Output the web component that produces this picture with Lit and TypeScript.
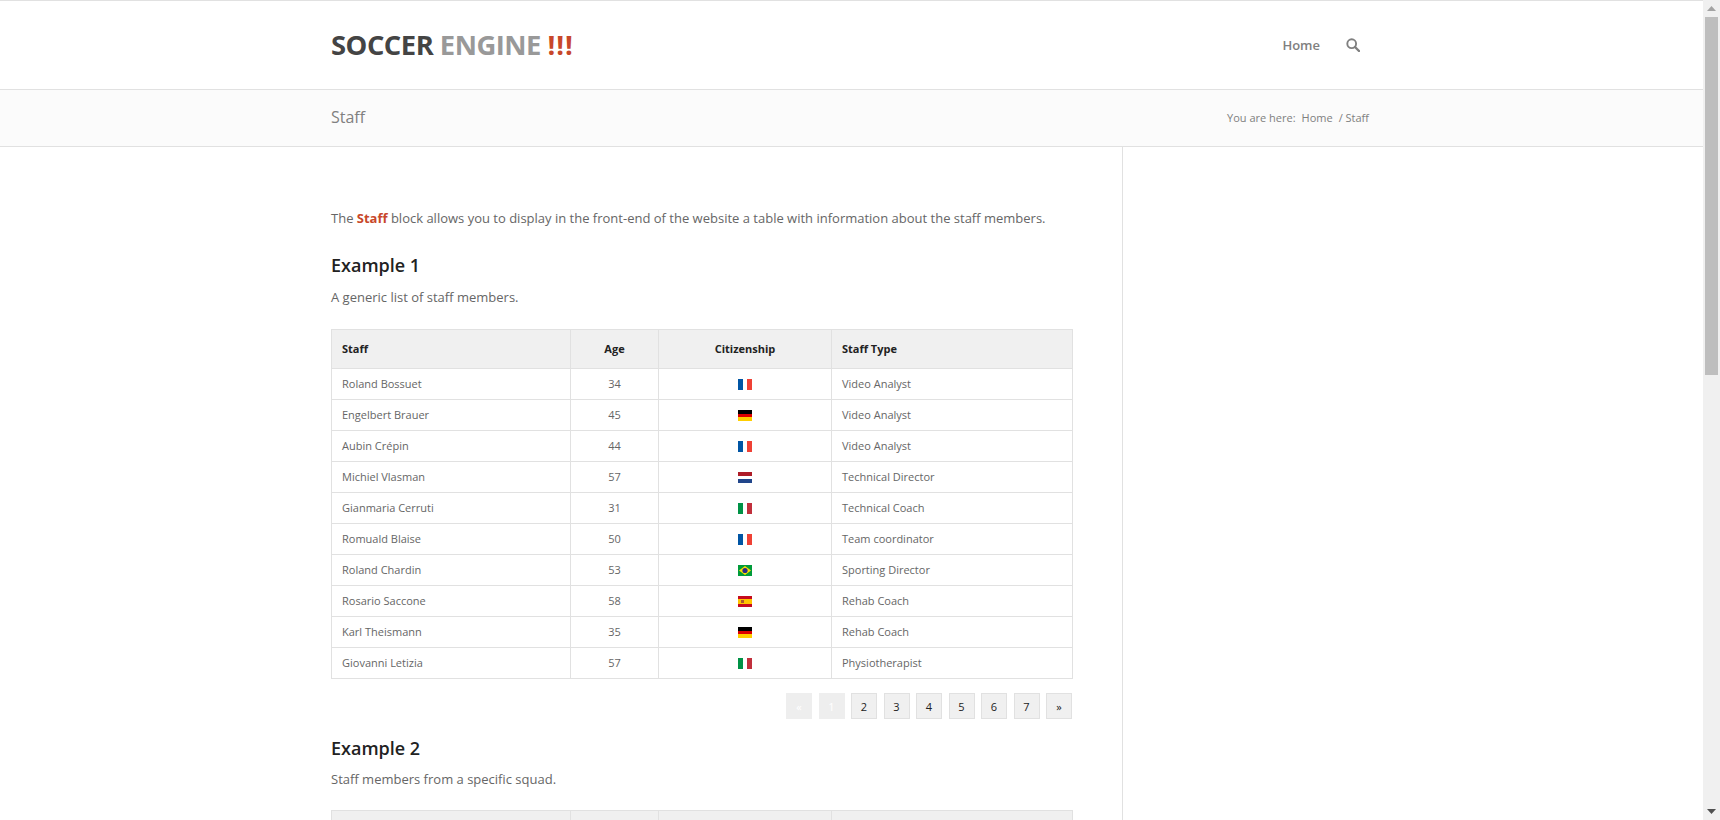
import { LitElement, html, css, svg } from "lit";
import { customElement } from "lit/decorators.js";

type Flag = "fr" | "de" | "nl" | "it" | "br" | "es";
const rows: [string, string, Flag, string][] = [
  ["Roland Bossuet", "34", "fr", "Video Analyst"],
  ["Engelbert Brauer", "45", "de", "Video Analyst"],
  ["Aubin Crépin", "44", "fr", "Video Analyst"],
  ["Michiel Vlasman", "57", "nl", "Technical Director"],
  ["Gianmaria Cerruti", "31", "it", "Technical Coach"],
  ["Romuald Blaise", "50", "fr", "Team coordinator"],
  ["Roland Chardin", "53", "br", "Sporting Director"],
  ["Rosario Saccone", "58", "es", "Rehab Coach"],
  ["Karl Theismann", "35", "de", "Rehab Coach"],
  ["Giovanni Letizia", "57", "it", "Physiotherapist"],
];

function flag(f: Flag) {
  const body = {
    fr: svg`<rect width="14" height="11" fill="#fff"/><rect width="5" height="11" fill="#0055a4"/><rect x="9" width="5" height="11" fill="#ef4135"/>`,
    it: svg`<rect width="14" height="11" fill="#fff"/><rect width="5" height="11" fill="#009246"/><rect x="9" width="5" height="11" fill="#c1303c"/>`,
    de: svg`<rect width="14" height="4" fill="#000"/><rect y="4" width="14" height="3" fill="#dd0000"/><rect y="7" width="14" height="4" fill="#ffce00"/>`,
    nl: svg`<rect width="14" height="4" fill="#ae1c28"/><rect y="4" width="14" height="3" fill="#fff"/><rect y="7" width="14" height="4" fill="#21468b"/>`,
    es: svg`<rect width="14" height="11" fill="#c60b1e"/><rect y="3" width="14" height="5" fill="#ffc400"/><rect x="3" y="4" width="3" height="3" fill="#ad5a2a"/>`,
    br: svg`<rect width="14" height="11" fill="#009b3a"/><path d="M7 1 13 5.5 7 10 1 5.5Z" fill="#fedf00"/><circle cx="7" cy="5.5" r="2.6" fill="#2a2a86"/>`,
  }[f];
  return html`<svg class="flag" width="14" height="11" viewBox="0 0 14 11">${body}</svg>`;
}

@customElement("app-root")
export class AppRoot extends LitElement {
  static styles = css`
    :host {
      display: flex;
      width: 1720px;
      height: 820px;
      overflow: hidden;
      background: #fff;
      font-family: "Open Sans", sans-serif;
      font-size: 13px;
      color: #666;
    }
    .page { width: 1703px; height: 820px; overflow: hidden; flex: none; }
    .inner { width: 1030px; margin-left: 331px; }
    .header { height: 88px; border-top: 1px solid #e1e1e1; border-bottom: 1px solid #e1e1e1; }
    .header .inner { height: 88px; display: flex; align-items: center; justify-content: space-between; box-sizing: border-box; }
    .logo { font-size: 27.4px; font-weight: 700; letter-spacing: -0.5px; line-height: 32px; margin-top: -1px; white-space: nowrap; }
    .logo .a { color: #444; }
    .logo .b { color: #999; }
    .logo .x { color: #c8472a; letter-spacing: 0.9px; }
    nav { display: flex; align-items: center; gap: 26px; margin-top: -1px; margin-right: 1px; }
    nav a { font-size: 13px; font-weight: 600; color: #808080; }
    nav svg { display: block; }
    .title { height: 56px; background: #fbfbfb; border-bottom: 1px solid #e1e1e1; }
    .title .inner { height: 56px; padding-bottom: 2px; box-sizing: border-box; display: flex; align-items: center; justify-content: space-between; width: 1038px; }
    .title h1 { margin: 0; font-size: 16px; font-weight: 400; color: #808080; }
    .crumbs { font-size: 11px; color: #808080; white-space: pre; display: flex; }
    .crumbs .m1 { margin-left: 6px; }
    .crumbs .m2 { margin-left: 6px; }
    .main { display: flex; height: 673px; }
    .content { width: 792px; margin-left: 331px; box-sizing: border-box; border-right: 1px solid #e1e1e1; height: 1000px; padding-top: 61px; flex: none; }
    .col { width: 742px; }
    p { margin: 0; line-height: 20px; font-size: 13px; }
    p b { color: #c8472a; font-weight: 700; }
    h3 { margin: 0; font-size: 18px; font-weight: 600; line-height: 24px; color: #222; }
    .h1 { margin-top: 25px; }
    .sub { margin-top: 10px; }
    .sub2 { margin-top: 9px; }
    .tbl { margin-top: 22px; }
    .tbl2 { margin-top: 21px; }
    table { display: table; border-collapse: collapse; width: 741px; table-layout: fixed; font-size: 11px; }
    th, td { border: 1px solid #e1e1e1; padding: 0 10px 1px; text-align: left; overflow: hidden; white-space: nowrap; }
    th { height: 39px; box-sizing: border-box; background: #f0f0f0; color: #222; font-weight: 700; font-size: 11px; }
    td { height: 31px; box-sizing: border-box; color: #666; }
    .c { text-align: center; }
    .flag { display: block; margin: 1px auto 0; }
    .pager { display: flex; justify-content: flex-end; gap: 6.5px; margin-top: 14px; padding-right: 1px; }
    .pager span { width: 26px; height: 26px; box-sizing: border-box; border: 1px solid #e1e1e1; background: #f0f0f0; color: #222; font-size: 11px; display: flex; align-items: center; justify-content: center; }
    .pager span.off { border-color: #eee; background: #eee; color: #fff; }
    .h2 { margin-top: 17px; }
    .sb { width: 17px; flex: none; background: #f0f0f0; display: flex; flex-direction: column; align-items: center; }
    .sb .up { height: 17px; display: flex; align-items: center; justify-content: center; flex: none; }
    .sb .thumb { width: 13px; height: 358px; background: #bebebe; flex: none; }
    .sb .down { margin-top: auto; height: 17px; display: flex; align-items: center; justify-content: center; flex: none; }
  `;

  private table(body: boolean) {
    return html`<table class=${body ? "tbl" : "tbl2"}>
      <colgroup><col style="width:239px" /><col style="width:88px" /><col style="width:173px" /><col style="width:241px" /></colgroup>
      <thead><tr><th>Staff</th><th class="c">Age</th><th class="c">Citizenship</th><th>Staff Type</th></tr></thead>
      ${body ? html`<tbody>${rows.map(r => html`<tr><td>${r[0]}</td><td class="c">${r[1]}</td><td>${flag(r[2])}</td><td>${r[3]}</td></tr>`)}</tbody>` : ""}
    </table>`;
  }

  render() {
    return html`
      <div class="page">
        <div class="header"><div class="inner">
          <div class="logo"><span class="a">SOCCER</span> <span class="b">ENGINE</span> <span class="x">!!!</span></div>
          <nav><a>Home</a>
            <svg width="14" height="14" viewBox="0 0 14 14"><circle cx="5.7" cy="5.7" r="4.4" fill="none" stroke="#808080" stroke-width="1.9"/><path d="M9 9l4 4" stroke="#808080" stroke-width="2.4" stroke-linecap="round"/></svg>
          </nav>
        </div></div>
        <div class="title"><div class="inner">
          <h1>Staff</h1>
          <div class="crumbs"><span>You are here:</span><span class="m1">Home</span><span class="m2">/ Staff</span></div>
        </div></div>
        <div class="main">
          <div class="content"><div class="col">
            <p>The <b>Staff</b> block allows you to display in the front-end of the website a table with information about the staff members.</p>
            <h3 class="h1">Example 1</h3>
            <p class="sub">A generic list of staff members.</p>
            ${this.table(true)}
            <div class="pager">
              <span class="off">«</span><span class="off">1</span><span>2</span><span>3</span><span>4</span><span>5</span><span>6</span><span>7</span><span>»</span>
            </div>
            <h3 class="h2">Example 2</h3>
            <p class="sub2">Staff members from a specific squad.</p>
            ${this.table(false)}
          </div></div>
        </div>
      </div>
      <div class="sb">
        <div class="up"><svg width="9" height="5" viewBox="0 0 9 5"><path d="M4.5 0 9 5H0Z" fill="#a3a3a3"/></svg></div>
        <div class="thumb"></div>
        <div class="down"><svg width="9" height="5" viewBox="0 0 9 5"><path d="M0 0H9L4.5 5Z" fill="#505050"/></svg></div>
      </div>
    `;
  }
}
